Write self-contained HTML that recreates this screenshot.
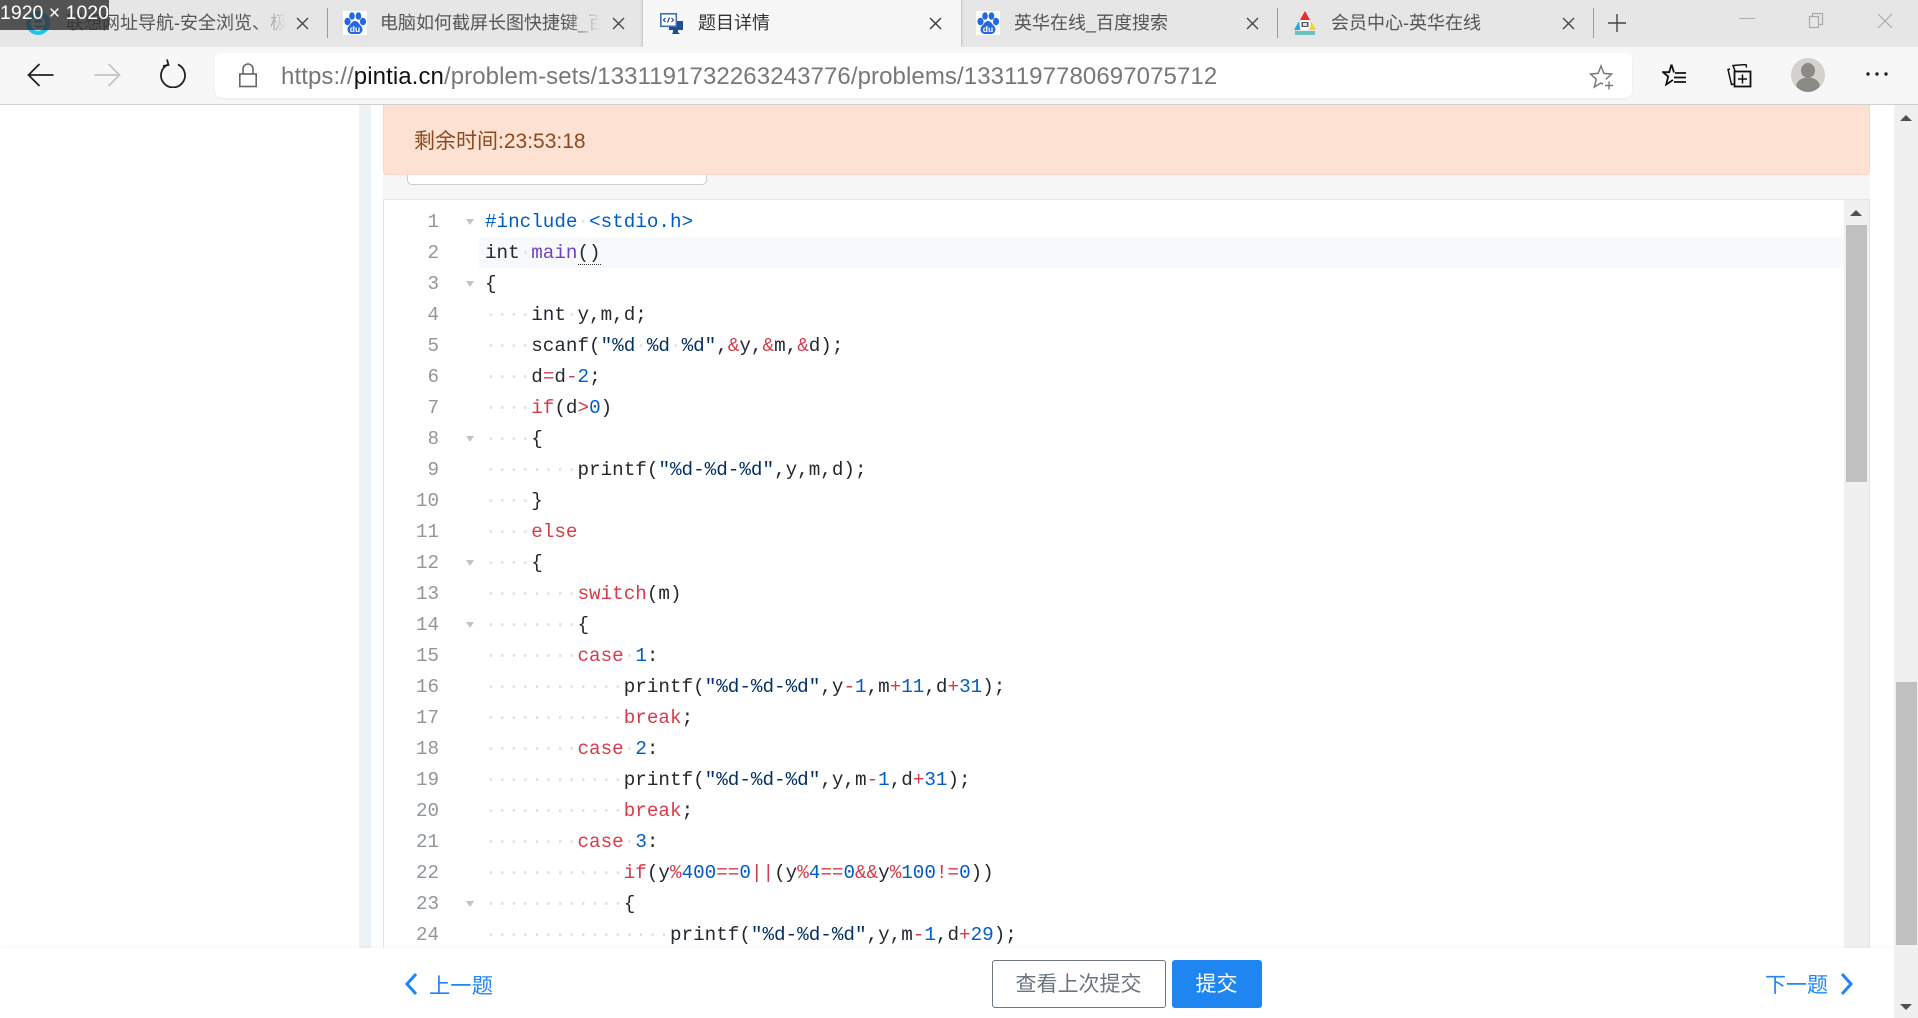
<!DOCTYPE html>
<html lang="zh"><head><meta charset="utf-8"><title>题目详情</title>
<style>
html,body{margin:0;padding:0;width:1918px;height:1018px;overflow:hidden;background:#fff}
body{font-family:"Liberation Sans","Noto Sans CJK SC",sans-serif;position:relative}
.a{position:absolute}
.tt{position:absolute;top:10px;height:27px;line-height:27px;font-size:18px;color:#555;white-space:nowrap;overflow:hidden}
.fade{-webkit-mask-image:linear-gradient(90deg,#000 85%,transparent);mask-image:linear-gradient(90deg,#000 85%,transparent)}
.sep{position:absolute;top:8px;width:1px;height:30px;background:#9a9a9a}
.x{position:absolute;top:17px}
.ln{position:absolute;left:399px;width:40px;margin-top:1px;text-align:right;font:19.2px/31px "Liberation Mono",monospace;color:#8f969c}
.c{position:absolute;left:485px;margin-top:1px;font:19.27px/31px "Liberation Mono",monospace;color:#24292e;white-space:pre}
.k,.o{color:#d73a49}.n{color:#005cc5}.s{color:#032f62}.f{color:#6f42c1}.w{color:#dfe1e3}
.fd{position:absolute;left:466px;width:0;height:0;border-left:4px solid transparent;border-right:4px solid transparent;border-top:6px solid #c4c4c4}
</style></head><body>

<!-- tab strip -->
<div class="a" style="left:0;top:0;width:1918px;height:47px;background:#e6e6e6"></div>
<div class="a" style="left:643px;top:0;width:318px;height:47px;background:#f7f7f7;box-shadow:0 0 3px rgba(0,0,0,.3)"></div>
<div class="a" style="left:0;top:47px;width:1918px;height:57px;background:#f7f7f7"></div>
<div class="a" style="left:0;top:104px;width:1918px;height:1px;background:#cfcfcf"></div>

<!-- tab 1 -->
<svg class="a" style="left:26px;top:10px" width="24" height="26" viewBox="0 0 24 26"><circle cx="12" cy="13" r="12" fill="#21c3ee"/><path d="M6 14h12c0-4-2.500-6-6-6s-6 2.500-6 5.500 2.500 6 6 6c2 0 3.500-.5 5-2" fill="none" stroke="#fff" stroke-width="2.500"/></svg>
<div class="tt fade" style="left:66px;width:220px">联想网址导航-安全浏览、极速</div>
<svg class="x" style="left:296px" width="13" height="13" viewBox="0 0 13 13"><path d="M1 1l11 11M12 1L1 12" stroke="#444" stroke-width="1.300"/></svg>
<div class="sep" style="left:327px"></div>
<!-- tab 2 -->
<svg class="a" style="left:343px;top:11px" width="24" height="24" viewBox="0 0 24 24"><rect width="24" height="24" fill="#fff"/><g fill="#2468e0"><ellipse cx="4.500" cy="10.500" rx="3.100" ry="3.800"/><ellipse cx="9" cy="5" rx="2.800" ry="3.800"/><ellipse cx="15.500" cy="5" rx="2.800" ry="3.800"/><ellipse cx="20" cy="10.500" rx="3.100" ry="3.800"/><path d="M12 10c-3 0-4 3-6.500 5.500-2.500 3.500 0 7.500 3.500 7.500h6c3.500 0 6-4 3.500-7.500C16 13 15 10 12 10z"/></g><text x="12" y="21" font-family="Liberation Sans" font-size="8.500" font-weight="700" fill="#fff" text-anchor="middle">du</text></svg>
<div class="tt fade" style="left:380px;width:220px">电脑如何截屏长图快捷键_百度搜索</div>
<svg class="x" style="left:612px" width="13" height="13" viewBox="0 0 13 13"><path d="M1 1l11 11M12 1L1 12" stroke="#444" stroke-width="1.300"/></svg>
<!-- tab 3 active -->
<svg class="a" style="left:660px;top:13px" width="24" height="22" viewBox="0 0 24 22"><path d="M9 8h14v9h-5v2l2 2h-8l1-2v-2H9z" fill="#1f4e92"/><rect x=".8" y=".8" width="15.500" height="12.500" fill="#fff" stroke="#3f6fb5" stroke-width="1.600"/><path d="M5.500 5L3.500 7l2 2M11.500 5l2 2-2 2M9.500 4.500L7.500 9.500" fill="none" stroke="#1f4e92" stroke-width="1.200"/></svg>
<div class="tt" style="left:698px;width:80px;color:#333">题目详情</div>
<svg class="x" style="left:929px" width="13" height="13" viewBox="0 0 13 13"><path d="M1 1l11 11M12 1L1 12" stroke="#333" stroke-width="1.300"/></svg>
<!-- tab 4 -->
<svg class="a" style="left:976px;top:11px" width="24" height="24" viewBox="0 0 24 24"><rect width="24" height="24" fill="#fff"/><g fill="#2468e0"><ellipse cx="4.500" cy="10.500" rx="3.100" ry="3.800"/><ellipse cx="9" cy="5" rx="2.800" ry="3.800"/><ellipse cx="15.500" cy="5" rx="2.800" ry="3.800"/><ellipse cx="20" cy="10.500" rx="3.100" ry="3.800"/><path d="M12 10c-3 0-4 3-6.500 5.500-2.500 3.500 0 7.500 3.500 7.500h6c3.500 0 6-4 3.500-7.500C16 13 15 10 12 10z"/></g><text x="12" y="21" font-family="Liberation Sans" font-size="8.500" font-weight="700" fill="#fff" text-anchor="middle">du</text></svg>
<div class="tt" style="left:1014px;width:180px">英华在线_百度搜索</div>
<svg class="x" style="left:1246px" width="13" height="13" viewBox="0 0 13 13"><path d="M1 1l11 11M12 1L1 12" stroke="#444" stroke-width="1.300"/></svg>
<div class="sep" style="left:1277px"></div>
<!-- tab 5 -->
<svg class="a" style="left:1293px;top:10px" width="24" height="26" viewBox="0 0 24 26"><path d="M12 1l5 9H7z" fill="#ee2a2a"/><path d="M6 11L1 20h6z" fill="#22a7e6"/><path d="M18 11l5 9h-6z" fill="#f5d327"/><rect x="7" y="10" width="10" height="10" rx="3" fill="#fff"/><rect x="8.500" y="12" width="7" height="5" fill="#555"/><rect x="10" y="13" width="4" height="3" fill="#ddd"/><rect x="2" y="21" width="20" height="4" fill="#3fb5b0" opacity=".75"/></svg>
<div class="tt" style="left:1331px;width:180px">会员中心-英华在线</div>
<svg class="x" style="left:1562px" width="13" height="13" viewBox="0 0 13 13"><path d="M1 1l11 11M12 1L1 12" stroke="#444" stroke-width="1.300"/></svg>
<div class="sep" style="left:1593px"></div>
<svg class="a" style="left:1607px;top:13px" width="20" height="20" viewBox="0 0 20 20"><path d="M10 1v18M1 10h18" stroke="#444" stroke-width="1.400"/></svg>
<!-- window controls -->
<div class="a" style="left:1739px;top:18px;width:16px;height:1px;background:#aaa"></div>
<svg class="a" style="left:1808px;top:12px" width="16" height="17" viewBox="0 0 16 17"><path d="M1.500 4.500h9v11h-9zM4.500 4.500v-3h10v11h-4" fill="none" stroke="#aaa" stroke-width="1.200"/></svg>
<svg class="a" style="left:1877px;top:13px" width="16" height="16" viewBox="0 0 16 16"><path d="M1 1l14 14M15 1L1 15" stroke="#aaa" stroke-width="1.200"/></svg>

<!-- dimension overlay -->
<div class="a" style="left:0;top:0;width:109px;height:30px;background:rgba(50,50,50,.82);color:#fff;font-size:19.500px;line-height:26px;text-align:center;white-space:nowrap">1920 × 1020</div>

<!-- toolbar -->
<svg class="a" style="left:27px;top:62px" width="28" height="26" viewBox="0 0 28 26"><path d="M1.500 13h25M12.500 2L1.500 13l11 11" fill="none" stroke="#222" stroke-width="1.800"/></svg>
<svg class="a" style="left:93px;top:62px" width="28" height="26" viewBox="0 0 28 26"><path d="M1.500 13h25M15.500 2l11 11-11 11" fill="none" stroke="#c4c4c4" stroke-width="1.800"/></svg>
<svg class="a" style="left:159px;top:58px" width="28" height="30" viewBox="0 0 28 30"><path d="M9 6.500a12 12 0 1 0 10 0M8 1.500l1.500 5.500-5.500 1" fill="none" stroke="#222" stroke-width="1.800"/></svg>
<div class="a" style="left:215px;top:53px;width:1417px;height:45px;background:#fff;border-radius:7px;box-shadow:0 1px 2px rgba(0,0,0,.06)"></div>
<svg class="a" style="left:238px;top:63px" width="20" height="25" viewBox="0 0 20 25"><path d="M5 11V6a5 5 0 0 1 10 0v5" fill="none" stroke="#666" stroke-width="1.600"/><rect x="1.800" y="11" width="16.400" height="12.500" fill="none" stroke="#666" stroke-width="1.600"/></svg>
<div class="a" style="left:281px;top:60px;font-size:24px;letter-spacing:.09px;line-height:34px;color:#777;white-space:nowrap">https://<span style="color:#111">pintia.cn</span>/problem-sets/1331191732263243776/problems/1331197780697075712</div>
<svg class="a" style="left:1589px;top:64px" width="26" height="26" viewBox="0 0 26 26"><path d="M16.800 15.500L22.500 10l-7.600-.6L12 2 9.100 9.400 1.500 10l5.800 5.300L5.300 23l6.700-4 2 1.200" fill="none" stroke="#7a7a7a" stroke-width="1.500"/><path d="M20 17.500v8M16 21.500h8" stroke="#7a7a7a" stroke-width="1.400"/></svg>
<svg class="a" style="left:1662px;top:63px" width="26" height="24" viewBox="0 0 26 24"><path d="M9.500 1.500L7.200 9.200H1l5.200 4.300-2 8L11 17M9.500 1.500l2.500 8" fill="none" stroke="#111" stroke-width="1.800"/><path d="M13 10h11M12 14.500h12M12 19h12" stroke="#111" stroke-width="1.800"/></svg>
<svg class="a" style="left:1727px;top:64px" width="26" height="24" viewBox="0 0 26 24"><path d="M8 7L6 1.500l13-1 .5 3M3 5l-2 .5 3.500 15 3-.5" fill="none" stroke="#111" stroke-width="1.500"/><rect x="7.500" y="7.500" width="16" height="15" fill="none" stroke="#111" stroke-width="1.800"/><path d="M15.500 10.500v9M11 15h9" stroke="#111" stroke-width="1.500"/></svg>
<svg class="a" style="left:1791px;top:58px" width="34" height="34" viewBox="0 0 34 34"><circle cx="17" cy="17" r="17" fill="#d2d1cd"/><ellipse cx="17" cy="12.500" rx="7" ry="7.500" fill="#8b8984"/><path d="M5 28c1.500-6 6-8.500 12-8.500S27.500 22 29 28c-3 3.500-7 6-12 6S8 31.500 5 28z" fill="#8b8984"/></svg>
<svg class="a" style="left:1865px;top:71px" width="24" height="6" viewBox="0 0 24 6"><circle cx="3" cy="3" r="1.700" fill="#222"/><circle cx="12" cy="3" r="1.700" fill="#222"/><circle cx="21" cy="3" r="1.700" fill="#222"/></svg>

<!-- page -->
<div class="a" style="left:359px;top:105px;width:12px;height:843px;background:#edf2f6"></div>
<div class="a" style="left:383px;top:175px;width:1487px;height:24px;background:#f6f6f6"></div>
<div class="a" style="left:407px;top:170px;width:298px;height:13px;background:#fff;border:1px solid #ccc;border-radius:0 0 5px 5px"></div>
<div class="a" style="left:383px;top:105px;width:1487px;height:70px;background:#fde2d3;border:1px solid #fbd7c3;border-top:0;box-sizing:border-box;border-radius:0 0 3px 3px"></div>
<div class="a" style="left:414px;top:125px;font-size:21px;line-height:34px;color:#8a4a20;white-space:nowrap">剩余时间:23:53:18</div>

<!-- editor -->
<div class="a" style="left:383px;top:199px;width:1487px;height:749px;background:#fff;border-top:1px solid #e5e5e5;border-left:1px solid #e5e5e5;box-sizing:border-box"></div>
<div class="a" style="left:479px;top:237px;width:1365px;height:31px;background:#f8f9fb"></div>
<div class="a" style="left:1844px;top:200px;width:25px;height:748px;background:#f0f0f0"></div>
<div class="a" style="left:1869px;top:200px;width:1px;height:748px;background:#e3e3e3"></div>
<div class="a" style="left:1846px;top:225px;width:21px;height:257px;background:#c0c0c0"></div>
<div class="a" style="left:1850px;top:210px;width:0;height:0;border-left:6px solid transparent;border-right:6px solid transparent;border-bottom:6px solid #505050"></div>

<div class="ln" style="top:206px">1</div><div class="ln" style="top:237px">2</div><div class="ln" style="top:268px">3</div><div class="ln" style="top:299px">4</div><div class="ln" style="top:330px">5</div><div class="ln" style="top:361px">6</div><div class="ln" style="top:392px">7</div><div class="ln" style="top:423px">8</div><div class="ln" style="top:454px">9</div><div class="ln" style="top:485px">10</div><div class="ln" style="top:516px">11</div><div class="ln" style="top:547px">12</div><div class="ln" style="top:578px">13</div><div class="ln" style="top:609px">14</div><div class="ln" style="top:640px">15</div><div class="ln" style="top:671px">16</div><div class="ln" style="top:702px">17</div><div class="ln" style="top:733px">18</div><div class="ln" style="top:764px">19</div><div class="ln" style="top:795px">20</div><div class="ln" style="top:826px">21</div><div class="ln" style="top:857px">22</div><div class="ln" style="top:888px">23</div><div class="ln" style="top:919px">24</div>

<div class="fd" style="top:219px"></div><div class="fd" style="top:281px"></div><div class="fd" style="top:436px"></div><div class="fd" style="top:560px"></div><div class="fd" style="top:622px"></div><div class="fd" style="top:901px"></div>

<div class="c" style="top:206px"><span class="n">#include</span><span class="w">·</span><span class="n">&lt;stdio.h&gt;</span></div>
<div class="c" style="top:237px">int<span class="w">·</span><span class="f">main</span><span style="border-bottom:1px dotted #333">()</span></div>
<div class="c" style="top:268px">{</div>
<div class="c" style="top:299px"><span class="w">····</span>int<span class="w">·</span>y,m,d;</div>
<div class="c" style="top:330px"><span class="w">····</span>scanf(<span class="s">"%d</span><span class="w">·</span><span class="s">%d</span><span class="w">·</span><span class="s">%d"</span>,<span class="o">&amp;</span>y,<span class="o">&amp;</span>m,<span class="o">&amp;</span>d);</div>
<div class="c" style="top:361px"><span class="w">····</span>d<span class="o">=</span>d<span class="o">-</span><span class="n">2</span>;</div>
<div class="c" style="top:392px"><span class="w">····</span><span class="k">if</span>(d<span class="o">&gt;</span><span class="n">0</span>)</div>
<div class="c" style="top:423px"><span class="w">····</span>{</div>
<div class="c" style="top:454px"><span class="w">········</span>printf(<span class="s">"%d-%d-%d"</span>,y,m,d);</div>
<div class="c" style="top:485px"><span class="w">····</span>}</div>
<div class="c" style="top:516px"><span class="w">····</span><span class="k">else</span></div>
<div class="c" style="top:547px"><span class="w">····</span>{</div>
<div class="c" style="top:578px"><span class="w">········</span><span class="k">switch</span>(m)</div>
<div class="c" style="top:609px"><span class="w">········</span>{</div>
<div class="c" style="top:640px"><span class="w">········</span><span class="k">case</span><span class="w">·</span><span class="n">1</span>:</div>
<div class="c" style="top:671px"><span class="w">············</span>printf(<span class="s">"%d-%d-%d"</span>,y<span class="o">-</span><span class="n">1</span>,m<span class="o">+</span><span class="n">11</span>,d<span class="o">+</span><span class="n">31</span>);</div>
<div class="c" style="top:702px"><span class="w">············</span><span class="k">break</span>;</div>
<div class="c" style="top:733px"><span class="w">········</span><span class="k">case</span><span class="w">·</span><span class="n">2</span>:</div>
<div class="c" style="top:764px"><span class="w">············</span>printf(<span class="s">"%d-%d-%d"</span>,y,m<span class="o">-</span><span class="n">1</span>,d<span class="o">+</span><span class="n">31</span>);</div>
<div class="c" style="top:795px"><span class="w">············</span><span class="k">break</span>;</div>
<div class="c" style="top:826px"><span class="w">········</span><span class="k">case</span><span class="w">·</span><span class="n">3</span>:</div>
<div class="c" style="top:857px"><span class="w">············</span><span class="k">if</span>(y<span class="o">%</span><span class="n">400</span><span class="o">==</span><span class="n">0</span><span class="o">||</span>(y<span class="o">%</span><span class="n">4</span><span class="o">==</span><span class="n">0</span><span class="o">&amp;&amp;</span>y<span class="o">%</span><span class="n">100</span><span class="o">!=</span><span class="n">0</span>))</div>
<div class="c" style="top:888px"><span class="w">············</span>{</div>
<div class="c" style="top:919px"><span class="w">················</span>printf(<span class="s">"%d-%d-%d"</span>,y,m<span class="o">-</span><span class="n">1</span>,d<span class="o">+</span><span class="n">29</span>);</div>

<!-- bottom bar -->
<div class="a" style="left:0;top:948px;width:1894px;height:70px;background:#fff;box-shadow:0 -1px 3px rgba(0,0,0,.04)"></div>
<svg class="a" style="left:403px;top:972px" width="16" height="24" viewBox="0 0 16 24"><path d="M13 2L4 12l9 10" fill="none" stroke="#1e86f5" stroke-width="3"/></svg>
<div class="a" style="left:429px;top:969px;font-size:21.300px;line-height:34px;color:#1e86f5">上一题</div>
<div class="a" style="left:992px;top:960px;width:174px;height:48px;box-sizing:border-box;border:1px solid #6c757d;border-radius:3px;background:#fff;color:#6c757d;font-size:21px;line-height:47px;text-align:center;text-indent:-1px">查看上次提交</div>
<div class="a" style="left:1172px;top:960px;width:90px;height:48px;border-radius:3px;background:#1f85f0;color:#fff;font-size:21px;line-height:49px;text-align:center;text-indent:-1px">提交</div>
<div class="a" style="left:1765px;top:969px;font-size:21px;line-height:34px;color:#1e86f5">下一题</div>
<svg class="a" style="left:1839px;top:972px" width="16" height="24" viewBox="0 0 16 24"><path d="M3 2l9 10-9 10" fill="none" stroke="#1e86f5" stroke-width="3"/></svg>

<!-- page scrollbar -->
<div class="a" style="left:1894px;top:105px;width:24px;height:913px;background:#f0f0f0"></div>
<div class="a" style="left:1896px;top:682px;width:21px;height:263px;background:#c0c0c0"></div>
<div class="a" style="left:1900px;top:115px;width:0;height:0;border-left:6px solid transparent;border-right:6px solid transparent;border-bottom:6px solid #505050"></div>
<div class="a" style="left:1900px;top:1004px;width:0;height:0;border-left:6px solid transparent;border-right:6px solid transparent;border-top:6px solid #505050"></div>
</body></html>
